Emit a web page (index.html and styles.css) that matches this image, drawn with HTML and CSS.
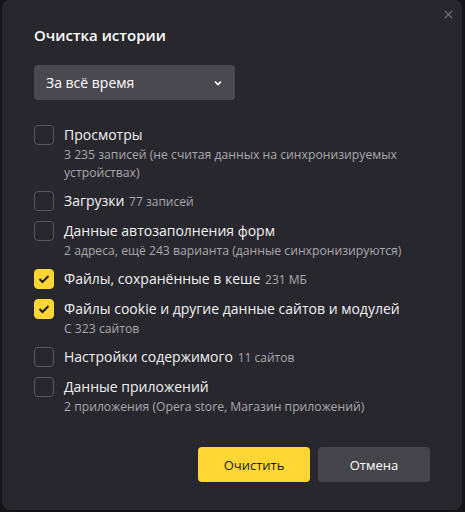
FILE: index.html
```html
<!DOCTYPE html>
<html lang="ru">
<head>
<meta charset="utf-8">
<link rel="stylesheet" href="styles.css">
</head>
<body>
<div class="dialog">
  <button class="close" aria-label="Закрыть">
    <svg width="9" height="9" viewBox="0 0 9 9"><path d="M0.8 0.8L8.2 8.2M8.2 0.8L0.8 8.2" stroke="#6b6a71" stroke-width="1.3"/></svg>
  </button>
  <h1 class="title">Очистка истории</h1>
  <div class="select">
    <span>За всё время</span>
    <svg class="chev" width="8" height="6" viewBox="0 0 8 6"><path d="M1 1.5L4 4.5L7 1.5" fill="none" stroke="#fff" stroke-width="1.6"/></svg>
  </div>
  <ul class="list">
    <li class="item">
      <span class="box"></span>
      <div class="text">
        <div class="label">Просмотры</div>
        <div class="sub">3 235 записей (не считая данных на синхронизируемых устройствах)</div>
      </div>
    </li>
    <li class="item">
      <span class="box"></span>
      <div class="text">
        <div class="label">Загрузки <span class="meta">77 записей</span></div>
      </div>
    </li>
    <li class="item">
      <span class="box"></span>
      <div class="text">
        <div class="label">Данные автозаполнения форм</div>
        <div class="sub">2 адреса, ещё 243 варианта (данные синхронизируются)</div>
      </div>
    </li>
    <li class="item">
      <span class="box checked"><svg width="12" height="10" viewBox="0 0 12 10"><path d="M1.5 5L4.5 8L10.5 2" fill="none" stroke="#1a1a1a" stroke-width="2"/></svg></span>
      <div class="text">
        <div class="label">Файлы, сохранённые в кеше <span class="meta">231 МБ</span></div>
      </div>
    </li>
    <li class="item">
      <span class="box checked"><svg width="12" height="10" viewBox="0 0 12 10"><path d="M1.5 5L4.5 8L10.5 2" fill="none" stroke="#1a1a1a" stroke-width="2"/></svg></span>
      <div class="text">
        <div class="label">Файлы cookie и другие данные сайтов и модулей</div>
        <div class="sub">С 323 сайтов</div>
      </div>
    </li>
    <li class="item">
      <span class="box"></span>
      <div class="text">
        <div class="label">Настройки содержимого <span class="meta">11 сайтов</span></div>
      </div>
    </li>
    <li class="item">
      <span class="box"></span>
      <div class="text">
        <div class="label">Данные приложений</div>
        <div class="sub">2 приложения (Opera store, Магазин приложений)</div>
      </div>
    </li>
  </ul>
  <div class="actions">
    <button class="btn primary">Очистить</button>
    <button class="btn secondary">Отмена</button>
  </div>
</div>
</body>
</html>
```

FILE: styles.css
```css
* { box-sizing: border-box; }
html, body { margin: 0; padding: 0; }
body {
  background: #141318;
  width: 465px;
  height: 512px;
  overflow: hidden;
  font-family: "Open Sans", "Noto Sans", sans-serif;
  color: #f2f2f4;
}
.dialog {
  position: relative;
  margin-left: 2px;
  width: 460px;
  height: 510px;
  background: #28272d;
  border-radius: 8px;
  padding: 24px 32px 0 32px;
}
.close {
  position: absolute;
  top: 7px;
  right: 7px;
  width: 14px;
  height: 14px;
  padding: 0;
  border: 0;
  background: none;
  display: flex;
  align-items: center;
  justify-content: center;
}
.title {
  margin: 0;
  font-size: 15px;
  font-weight: 600;
  line-height: 22px;
  color: #fff;
}
.select {
  margin-top: 19px;
  width: 201px;
  height: 35px;
  background: #4a494f;
  border-radius: 4px;
  display: flex;
  align-items: center;
  justify-content: space-between;
  padding: 0 13px 0 12px;
  font-size: 14px;
  color: #fff;
}
.list {
  list-style: none;
  margin: 25px 0 0 0;
  padding: 0;
}
.item {
  display: flex;
  gap: 10px;
  margin-bottom: 9px;
}
.box {
  flex: none;
  width: 20px;
  height: 20px;
  border: 1.5px solid #58575d;
  border-radius: 4px;
  display: flex;
  align-items: center;
  justify-content: center;
}
.box.checked {
  background: #ffd633;
  border-color: #ffd633;
}
.label {
  font-size: 14px;
  line-height: 20px;
  color: #f2f2f4;
}
.meta {
  font-size: 12px;
  color: #a9a8ae;
  margin-left: 1px;
}
.sub {
  margin-top: 1px;
  font-size: 12.2px;
  line-height: 18px;
  color: #a9a8ae;
}
.actions {
  display: flex;
  justify-content: flex-end;
  gap: 8px;
  margin-top: 31px;
}
.btn {
  width: 112px;
  height: 35px;
  border: 0;
  border-radius: 4px;
  font-family: inherit;
  font-size: 13px;
}
.primary { background: #ffd633; color: #1a1a1a; }
.secondary { background: #45444a; color: #fff; }
```
